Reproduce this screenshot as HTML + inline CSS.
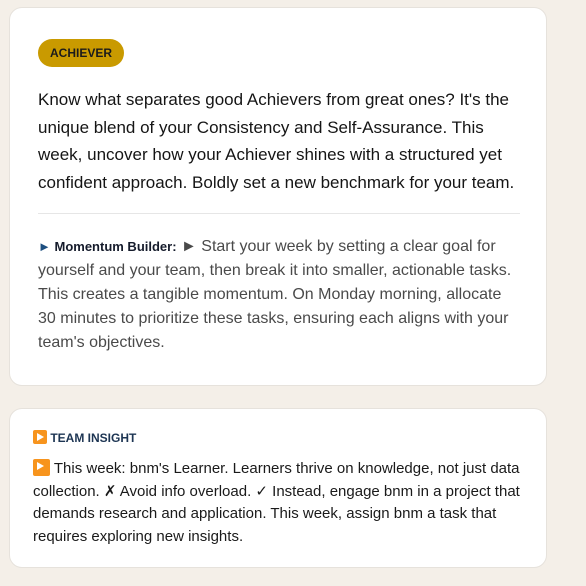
<!DOCTYPE html>
<html><head><style>
body{margin:0;background:#f4efe8;font-family:"Liberation Sans",sans-serif;width:586px;height:586px;overflow:hidden;position:relative}
.card{position:absolute;left:9px;width:538px;background:#fff;border:1px solid #e6e2dc;border-radius:13px;box-sizing:border-box}
.badge{position:absolute;left:28px;top:31px;width:86px;height:28px;border-radius:14px;background:#c99a00;color:#1b1b1b;font-size:12px;font-weight:bold;text-align:center;line-height:28px}
.p1{position:absolute;left:28px;top:78px;width:490px;font-size:17px;line-height:27.5px;color:#151515}
.hr{position:absolute;left:28px;top:205px;width:482px;height:1px;background:#e6e6e6}
.p2{position:absolute;left:28px;top:227px;width:475px;font-size:16px;line-height:24px;color:#4a4a4a}
.p2 b{color:#151b2b;font-size:13px}
.ic{display:inline-block;width:14px;height:14px;background:#f7941d;border-radius:2px;position:relative;vertical-align:-2px}
.ic:after{content:"";position:absolute;left:4px;top:3px;border-left:7px solid #fff;border-top:4px solid transparent;border-bottom:4px solid transparent}
.h{position:absolute;left:23px;top:21px;font-size:12px;font-weight:bold;color:#1d3553}
.p3{position:absolute;left:23px;top:49px;width:500px;font-size:15px;line-height:22.5px;color:#1a1a1a}
</style></head><body>
<div class="card" style="top:7px;height:379px">
<div class="badge">ACHIEVER</div>
<div class="p1">Know what separates good Achievers from great ones? It's the unique blend of your Consistency and Self-Assurance. This week, uncover how your Achiever shines with a structured yet confident approach. Boldly set a new benchmark for your team.</div>
<div class="hr"></div>
<div class="p2"><b><span style="color:#1d4f80">►</span> Momentum Builder:</b> ► Start your week by setting a clear goal for yourself and your team, then break it into smaller, actionable tasks. This creates a tangible momentum. On Monday morning, allocate 30 minutes to prioritize these tasks, ensuring each aligns with your team's objectives.</div>
</div>
<div class="card" style="top:408px;height:160px">
<div class="h"><span class="ic"></span> TEAM INSIGHT</div>
<div class="p3"><span class="ic" style="width:17px;height:17px;vertical-align:-3px"></span> This week: bnm's Learner. Learners thrive on knowledge, not just data collection. ✗ Avoid info overload. ✓ Instead, engage bnm in a project that demands research and application. This week, assign bnm a task that requires exploring new insights.</div>
</div>
</body></html>
